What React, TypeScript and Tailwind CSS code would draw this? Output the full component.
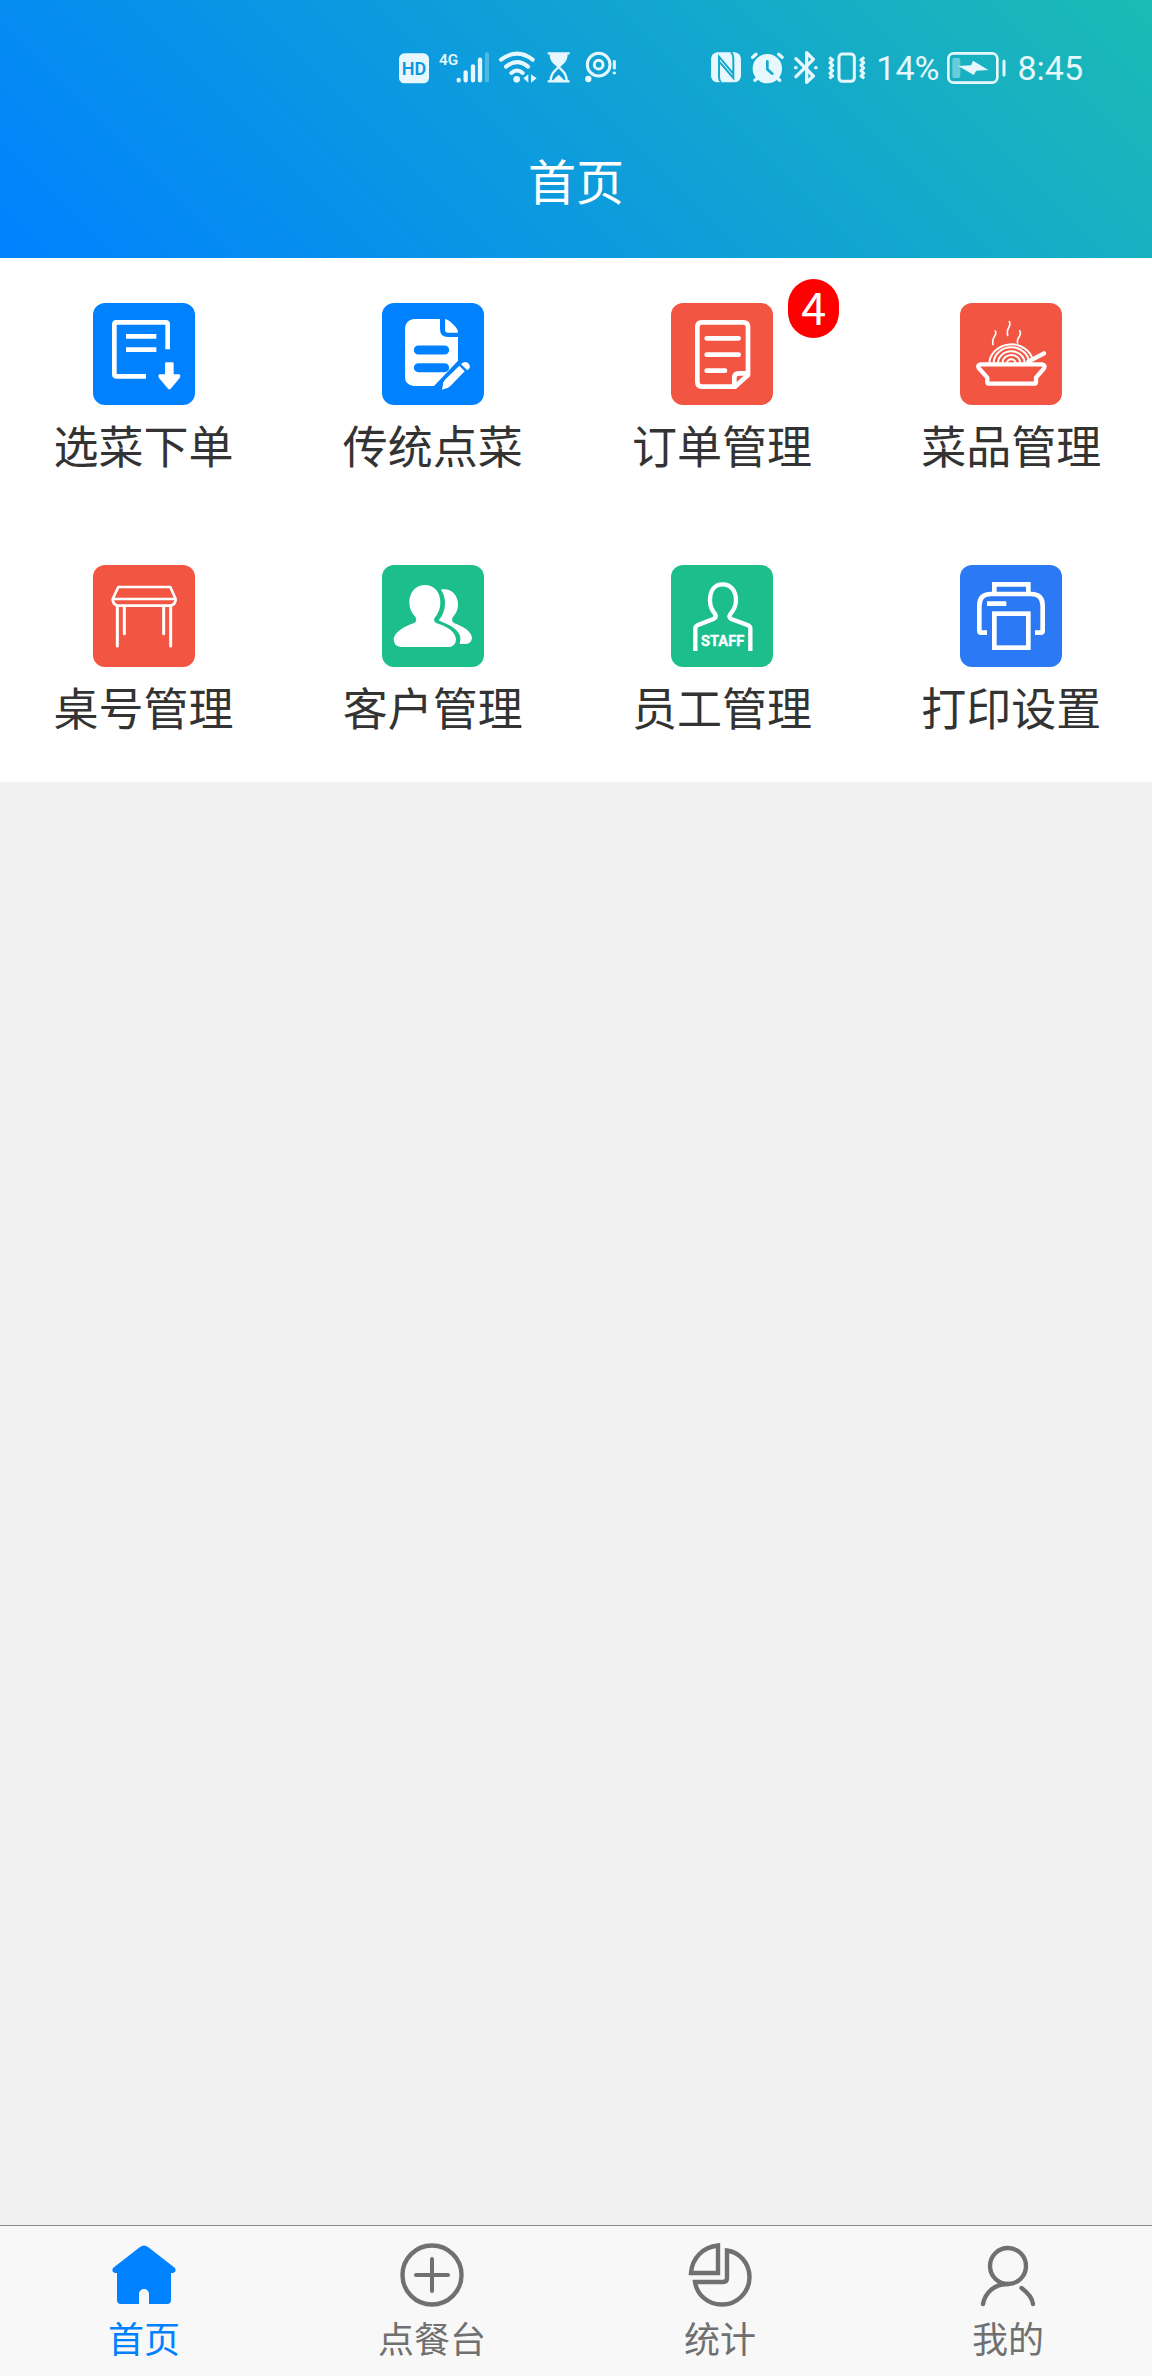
import React from "react";

const font = "font-['Noto_Sans_CJK_SC',sans-serif]";

const StatusBar: React.FC = () => (
  <div className="flex h-[108px] items-center justify-end gap-[94px] pt-7 pr-[69px] text-[#e6f8fd]">
    <div className="flex items-center gap-2.5">
      {/* HD */}
      <svg width="30" height="40" viewBox="0 0 90 120" fill="currentColor">
        <rect y="16" width="90" height="90" rx="16" />
        <text x="45" y="81" textAnchor="middle" fontFamily="Roboto" fontWeight="600" fontSize="54" fill="#0c96e2">HD</text>
      </svg>
      {/* 4G signal */}
      <svg width="50" height="40" viewBox="0 0 150 120" fill="none" stroke="currentColor" strokeWidth="13" strokeLinecap="round">
        <text x="0" y="52" fontFamily="Roboto" fontWeight="600" fontSize="46" fill="currentColor" stroke="none">4G</text>
        <path d="M59 96v1M80 73v24M102 55v42M123 35v62" />
        <path d="M144 19v78" opacity=".3" />
      </svg>
      {/* wifi */}
      <svg width="38" height="40" viewBox="0 0 114 120" fill="currentColor">
        <g fill="none" stroke="currentColor" strokeWidth="12" strokeLinecap="round">
          <path d="M6 35Q54-1 101 35M21 56Q54 29 87 56M37 75Q54 60 71 75" />
        </g>
        <circle cx="53" cy="94" r="10" />
        <path d="M73 91L88 79V104ZM96 79L113 91L96 104Z" />
      </svg>
      {/* hourglass */}
      <svg width="24" height="40" viewBox="0 0 72 120" fill="currentColor">
        <path d="M8 18H62C62 40 50 48 38 58H32C20 48 8 40 8 18Z" />
        <path d="M16 99Q22 92 35 80Q48 92 54 99Z" />
        <path d="M2 16H68M2 100H68M11 99C11 78 22 70 35 57C48 70 59 78 59 99" fill="none" stroke="currentColor" strokeWidth="7" />
      </svg>
      {/* eye alert */}
      <svg className="ml-1" width="32" height="40" viewBox="0 0 96 120" fill="none" stroke="currentColor" strokeWidth="9">
        <circle cx="41" cy="50" r="34" />
        <circle cx="41" cy="50" r="13" />
        <circle cx="10" cy="93" r="5" />
        <path d="M88 37V64M88 71V79" />
      </svg>
    </div>
    <div className="flex items-center gap-2.5">
      {/* nfc */}
      <svg width="30" height="40" viewBox="0 0 90 120" fill="none">
        <rect y="13" width="90" height="90" rx="20" fill="currentColor" />
        <path d="M30 103Q24 97 24 86V26L66 76M60 13Q67 19 67 30V90L24 40" stroke="#14a9cf" strokeWidth="6" />
      </svg>
      {/* alarm */}
      <svg width="33" height="40" viewBox="0 0 99 120" fill="none" stroke="currentColor" strokeWidth="10" strokeLinecap="round">
        <circle cx="49" cy="62" r="39" fill="currentColor" />
        <path d="M5 28L15 19M83 19L93 28M12 97L20 90M86 97L78 90" />
        <path d="M49 40V64L64 77" stroke="#15abcb" strokeWidth="8" />
      </svg>
      {/* bluetooth */}
      <svg width="24" height="40" viewBox="0 0 72 120" fill="none" stroke="currentColor" strokeWidth="10" strokeLinecap="round" strokeLinejoin="round">
        <path d="M6 32L58 84L38 103V14L58 34L6 86M5 59H6M65 59H66" />
      </svg>
      {/* vibrate */}
      <svg width="38" height="40" viewBox="0 0 114 120" fill="none" stroke="currentColor" strokeWidth="9" strokeLinejoin="round">
        <rect x="33" y="18" width="46" height="82" rx="10" />
        <path d="M4 28L14 36L6 44L14 52L6 60L14 68L6 76L14 84L4 91M109 28L99 36L107 44L99 52L107 60L99 68L107 76L99 84L109 91" />
      </svg>
      <div className="flex items-center gap-2">
        <span className="font-[Roboto] text-[34px] leading-10">14%</span>
        {/* battery */}
        <svg width="60" height="40" viewBox="0 0 180 120" fill="none">
          <rect x="4" y="16" width="147" height="88" rx="16" stroke="currentColor" strokeWidth="8" />
          <rect x="16" y="30" width="24" height="60" rx="5" fill="currentColor" opacity=".4" />
          <path d="M34 54L72 52L78 38L124 66L88 68L80 81Z" fill="currentColor" />
          <path d="M171 39V81" stroke="currentColor" strokeWidth="9" strokeLinecap="round" />
        </svg>
      </div>
      <span className="font-[Roboto] text-[34px] leading-10">8:45</span>
    </div>
  </div>
);

const stroke = { fill: "none", stroke: "#fff" };

const entries = [
  {
    label: "选菜下单",
    color: "bg-[#0081ff]",
    icon: (
      <>
        <path {...stroke} strokeWidth="14" d="M224 139V64Q224 58 218 58H70Q64 58 64 64V214Q64 220 70 220H159M99 100H190M99 140H190" />
        <path fill="#fff" d="M216 182Q216 178 220 178H238Q242 178 242 182V214H258Q265 216 260 225L233 257Q229 261 225 257L198 225Q193 216 200 214H216Z" />
      </>
    ),
  },
  {
    label: "传统点菜",
    color: "bg-[#0081ff]",
    icon: (
      <>
        <path fill="#fff" d="M95 48H174V78Q174 102 198 102H228V173L156 249H95Q69 245 69 223V76Q71 52 95 48Z" />
        <path fill="#fff" d="M189 48Q198 50 206 57L221 72Q228 80 228 89H198Q189 89 189 80Z" />
        <path stroke="#0081ff" strokeWidth="27" strokeLinecap="round" d="M109 141H188M109 194H188" />
        <path fill="#fff" d="M180 260L184 238L189 230L232 188L248 205L206 248L198 254Z" />
        <path fill="#fff" d="M237 184Q247 173 257 179Q268 188 261 197L256 202Z" />
      </>
    ),
  },
  {
    label: "订单管理",
    color: "bg-[#f35543]",
    badge: 4,
    icon: (
      <g {...stroke} strokeWidth="14" strokeLinecap="round" strokeLinejoin="round">
        <path d="M231 216V72Q231 58 217 58H93Q79 58 79 72V237Q79 251 93 251H192ZM190 249V224Q190 211 203 211H229" />
        <path d="M107 106H203M107 155H203M107 203H162" />
      </g>
    ),
  },
  {
    label: "菜品管理",
    color: "bg-[#f35543]",
    icon: (
      <g {...stroke} strokeLinecap="round" strokeLinejoin="round">
        <path strokeWidth="13" d="M62 184H246Q257 186 252 196L228 224V236Q228 242 222 242H88Q82 242 82 236V224L57 196Q51 186 62 184ZM205 176L252 151" />
        <path strokeWidth="6" d="M88 180A66 60 0 0 1 218 170M101 180A53 47 0 0 1 207 180M114 180A40 35 0 0 1 194 180M127 180A27 24 0 0 1 181 180M141 180A13 11 0 0 1 167 180" />
        <path strokeWidth="5" d="M106 84Q110 92 103 101T99 125M148 56Q152 64 146 74T143 97M179 83Q184 92 177 102T173 120" />
      </g>
    ),
  },
  {
    label: "桌号管理",
    color: "bg-[#f35543]",
    icon: (
      <g {...stroke} strokeLinecap="round" strokeLinejoin="round">
        <path strokeWidth="8" d="M76 66H232L248 102H59ZM59 102Q58 115 72 122H235Q249 115 248 102" />
        <path strokeWidth="9" d="M73 122V243M233 122V243M94 124V206M212 124V206" />
      </g>
    ),
  },
  {
    label: "客户管理",
    color: "bg-[#1cbf8c]",
    icon: (
      <g fill="#fff">
        <path d="M129 60C156 60 175 82 175 111C175 132 168 147 159 157Q152 167 162 174C190 182 221 198 222 224Q220 246 198 246H58Q35 245 35 223C37 200 72 182 95 175Q107 168 100 155C88 144 82 130 82 111C82 82 102 60 129 60Z" />
        <path d="M177 74C205 68 228 88 228 118C228 135 222 146 213 155Q206 167 217 175C243 184 269 200 270 219Q268 237 248 237H233C243 208 222 190 196 178Q178 170 170 166C182 153 189 135 189 112Q188 90 177 74Z" />
      </g>
    ),
  },
  {
    label: "员工管理",
    color: "bg-[#1cbf8c]",
    icon: (
      <>
        <path {...stroke} strokeWidth="13" d="M73 258V190Q73 184 79 181L127 162Q137 157 133 148C121 135 117 122 117 106C117 78 130 58 155 58C180 58 195 78 195 106C195 122 189 135 177 149Q172 157 181 162L231 181Q238 184 238 190V258" />
        <text x="155" y="243" textAnchor="middle" fill="#fff" stroke="#fff" strokeWidth="1" fontFamily="Roboto" fontWeight="700" fontSize="44">
          STAFF
        </text>
      </>
    ),
  },
  {
    label: "打印设置",
    color: "bg-[#2b79f5]",
    icon: (
      <g {...stroke} strokeWidth="14">
        <path d="M103 87V58H205V87M81 203H64Q58 203 58 197V122Q58 87 93 87H213Q248 87 248 122V197Q248 203 242 203H225M81 116H139" />
        <rect x="103" y="146" width="102" height="102" />
      </g>
    ),
  },
];

const tabs = [
  {
    label: "首页",
    active: true,
    icon: (
      <path
        fill="currentColor"
        d="M28 4Q32 1 36 4L63 25Q65 29 61 30H59V57Q59 61 55 61H37V51A5 5 0 0 0 27 51V61H9Q5 61 5 57V30H3Q-1 29 1 25Z"
      />
    ),
  },
  {
    label: "点餐台",
    icon: (
      <>
        <circle cx="32" cy="32" r="29.5" />
        <path d="M32 16V48M16 32H48" strokeWidth="4" strokeLinecap="round" />
      </>
    ),
  },
  {
    label: "统计",
    icon: (
      <path d="M30 2.5V30H3C4 15 15 4 30 2.5ZM39 7.5V35Q39 39 35 39H7C9 52 20 61.5 34 61.5A27.5 27.5 0 0 0 61.5 34C61.5 20 51 9 39 7.5Z" />
    ),
  },
  {
    label: "我的",
    icon: (
      <>
        <circle cx="32" cy="23" r="18" />
        <path d="M7 61C9 50 18 41 32 41M45.5 45C51 49 56 54 57 61" strokeLinecap="round" />
      </>
    ),
  },
];

const App: React.FC = () => {
  return (
    <div className={`flex min-h-screen flex-col overflow-x-hidden bg-[#f1f1f1] ${font}`}>
      <header className="bg-[linear-gradient(45deg,#0081ff,#1cbbb4)] text-white">
        <StatusBar />
        <h1 className="flex h-[150px] items-center justify-center pb-2 text-5xl">首页</h1>
      </header>

      {/* Shortcut grid */}
      <main className="bg-white">
        <div className="-mr-1 -ml-px grid grid-cols-4">
          {entries.map((entry) => (
            <a key={entry.label} href="#" className="flex h-[262px] flex-col items-center pt-[45px] text-[#333]">
              <span className={`relative size-[102px] rounded-xl ${entry.color}`}>
                <svg className="size-full" viewBox="0 0 306 306">
                  {entry.icon}
                </svg>
                {entry.badge && (
                  <span className="absolute -top-6 -right-[66px] flex h-[59px] w-[51px] items-center justify-center rounded-[26px] bg-[#ff0000] pb-1.5 text-[45px] leading-none text-white">
                    {entry.badge}
                  </span>
                )}
              </span>
              <span className="mt-2 text-[45px] leading-[64px]">{entry.label}</span>
            </a>
          ))}
        </div>
      </main>

      {/* Tab bar */}
      <nav className="mt-auto grid h-[151px] grid-cols-4 border-t border-[#8c8c8c] bg-[#f8f8f8]">
        {tabs.map((tab) => (
          <a
            key={tab.label}
            href="#"
            className={`flex flex-col items-center pt-[17px] ${tab.active ? "text-[#0081ff]" : "text-[#707070]"}`}
          >
            <svg className="size-16" viewBox="0 0 64 64" fill="none" stroke={tab.active ? "none" : "currentColor"} strokeWidth="4.4">
              {tab.icon}
            </svg>
            <span className="mt-1.5 text-[36px] leading-[48px]">{tab.label}</span>
          </a>
        ))}
      </nav>
    </div>
  );
};

export default App;
